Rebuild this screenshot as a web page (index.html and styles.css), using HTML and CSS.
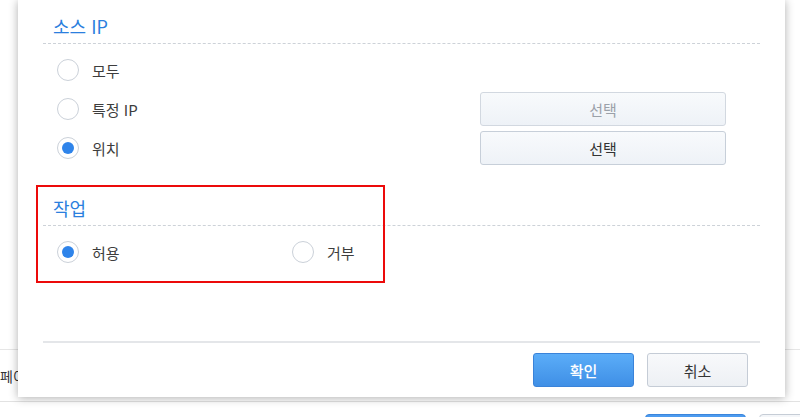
FILE: index.html
```html
<!DOCTYPE html>
<html lang="ko">
<head>
<meta charset="utf-8">
<title>방화벽 규칙</title>
<link rel="stylesheet" href="styles.css">
</head>
<body>
<div class="page">
  <div class="page-bar"><span class="page-text">페이지</span></div>
  <div class="page-actions"><span class="pbtn pbtn-primary"></span><span class="pbtn"></span></div>
</div>
<div class="dialog">
  <section class="group">
    <h2 class="group-title">소스 IP</h2>
    <div class="options">
      <div class="row"><label class="radio"><span class="dot"></span>모두</label></div>
      <div class="row"><label class="radio"><span class="dot"></span>특정 IP</label><button class="btn btn-select" disabled>선택</button></div>
      <div class="row"><label class="radio"><span class="dot on"></span>위치</label><button class="btn btn-select">선택</button></div>
    </div>
  </section>
  <section class="group group-action">
    <h2 class="group-title">작업</h2>
    <div class="options">
      <div class="row"><label class="radio col"><span class="dot on"></span>허용</label><label class="radio"><span class="dot"></span>거부</label></div>
    </div>
  </section>
  <div class="spacer"></div>
  <div class="footer">
    <button class="btn btn-primary">확인</button>
    <button class="btn btn-default">취소</button>
  </div>
  <div class="highlight"></div>
</div>
</body>
</html>
```

FILE: styles.css
```css
* { box-sizing: border-box; }
html, body {
  margin: 0;
  padding: 0;
  width: 800px;
  height: 417px;
  overflow: hidden;
  background: #fff;
  font-family: "Noto Sans CJK KR", "Noto Sans", sans-serif;
  color: #333;
}
.page {
  width: 800px;
  height: 417px;
  overflow: hidden;
  padding-top: 349px;
}
.page-bar {
  border-top: 1px solid #e6e6e6;
  border-bottom: 1px solid #e2e2e2;
  height: 53px;
  display: flex;
  align-items: center;
}
.page-text {
  margin-left: 0;
  font-size: 14px;
  color: #333;
}
.page-actions {
  display: flex;
  gap: 13px;
  padding-top: 12px;
  padding-left: 645px;
}
.pbtn {
  flex: none;
  width: 101px;
  height: 34px;
  border: 1px solid #c6cdd6;
  border-radius: 4px;
  background: #f4f6f9;
}
.pbtn-primary {
  border-color: #3b86dc;
  background: #4d9bef;
}

.dialog {
  position: absolute;
  left: 18px;
  top: 0;
  width: 767px;
  height: 397px;
  background: #fff;
  box-shadow: 0 1px 9px rgba(0, 0, 0, 0.32);
  padding: 14px 25px 0;
  display: flex;
  flex-direction: column;
}
.group-title {
  margin: 0;
  padding: 0 0 5px 10px;
  font-size: 18px;
  line-height: 24px;
  font-weight: 400;
  color: #2b7fde;
  border-bottom: 1px dashed #cdd2d8;
}
.options {
  padding: 9px 0 0 14px;
  display: flex;
  flex-direction: column;
  gap: 5px;
}
.row {
  height: 34px;
  display: flex;
  align-items: center;
  padding-right: 34px;
}
.radio {
  display: flex;
  align-items: center;
  gap: 13px;
  font-size: 15px;
  color: #3d3d3d;
}
.radio.col {
  width: 235px;
}
.dot {
  width: 22px;
  height: 22px;
  border-radius: 50%;
  border: 1px solid #cbd1d9;
  background: #fff;
  display: flex;
  align-items: center;
  justify-content: center;
}
.dot.on::after {
  content: "";
  width: 12px;
  height: 12px;
  border-radius: 50%;
  background: #2f84ea;
}
.btn {
  font-family: inherit;
  font-size: 15px;
  height: 34px;
  border: 1px solid #c7cfd9;
  border-radius: 3px;
  background: linear-gradient(#f8fafc, #eef2f7);
  color: #333;
  padding: 0;
}
.btn-select {
  margin-left: auto;
  width: 246px;
}
.btn-select:disabled {
  color: #9ba1a9;
  border-color: #d2d8e0;
}
.group-action {
  margin-top: 31px;
}
.spacer { flex: 1; }
.footer {
  border-top: 2px solid #e4e6e9;
  padding: 10px 12px 10px 0;
  display: flex;
  justify-content: flex-end;
  gap: 13px;
}
.btn-primary,
.btn-default {
  width: 101px;
}
.btn-primary {
  background: linear-gradient(#5badf8, #3f8fe6);
  border-color: #3a83d9;
  color: #fff;
  font-weight: 500;
}
.btn-default {
  background: linear-gradient(#f8f9fb, #edf0f4);
  border-color: #c5ccd6;
}
.highlight {
  position: absolute;
  left: 18px;
  top: 185px;
  width: 349px;
  height: 98px;
  border: 2px solid #ec0a0a;
  pointer-events: none;
}
```
